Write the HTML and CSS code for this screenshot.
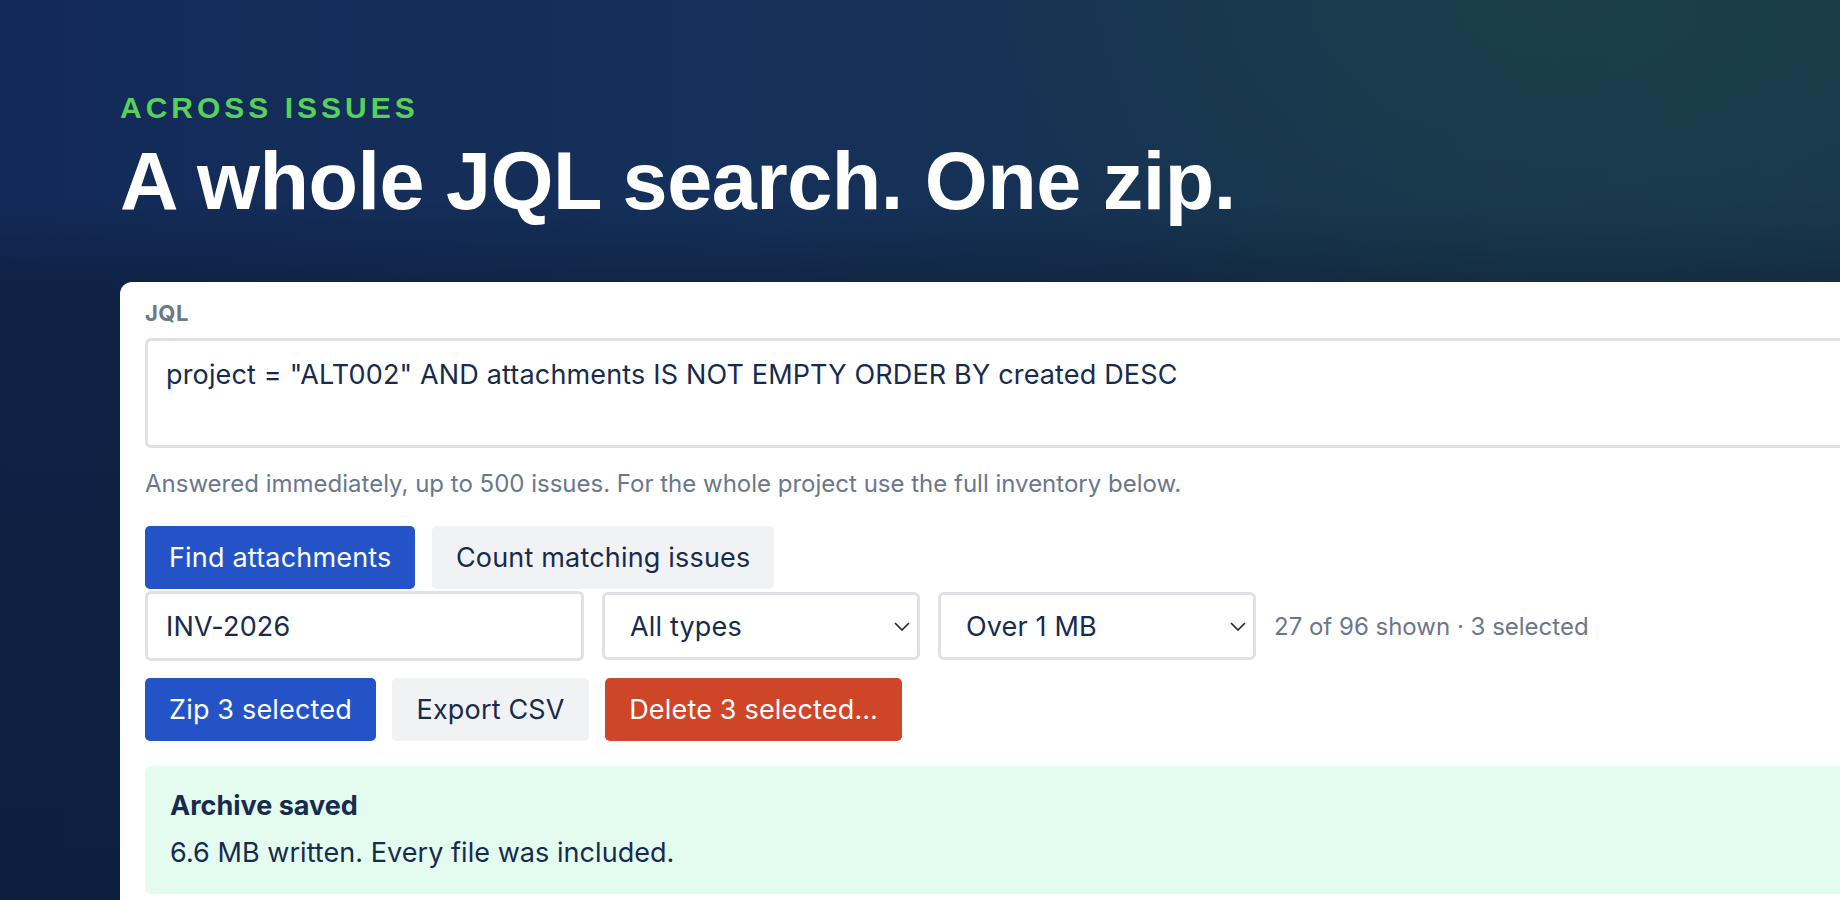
FILE: index.html
```html
<!DOCTYPE html>
<html lang="en">
<head>
<meta charset="utf-8">
<title>Across issues</title>
<link rel="stylesheet" href="styles.css">
</head>
<body>
<main class="page">
  <p class="eyebrow">ACROSS ISSUES</p>
  <h1 class="title">A whole JQL search. One zip.</h1>
  <section class="card">
    <label class="field-label" for="jql">JQL</label>
    <textarea id="jql" class="jql" spellcheck="false">project = "ALT002" AND attachments IS NOT EMPTY ORDER BY created DESC</textarea>
    <p class="hint">Answered immediately, up to 500 issues. For the whole project use the full inventory below.</p>
    <div class="actions actions-top">
      <button class="btn btn-primary" type="button">Find attachments</button>
      <button class="btn btn-secondary" type="button">Count matching issues</button>
    </div>
    <div class="filters">
      <input class="filter-input" type="text" value="INV-2026" spellcheck="false">
      <div class="select-wrap">
        <select class="select"><option>All types</option></select>
        <svg class="chev" viewBox="0 0 16 9" aria-hidden="true"><path d="M1 1 L8 8 L15 1"/></svg>
      </div>
      <div class="select-wrap">
        <select class="select"><option>Over 1 MB</option></select>
        <svg class="chev" viewBox="0 0 16 9" aria-hidden="true"><path d="M1 1 L8 8 L15 1"/></svg>
      </div>
      <span class="count">27 of 96 shown · 3 selected</span>
    </div>
    <div class="actions actions-bottom">
      <button class="btn btn-primary" type="button">Zip 3 selected</button>
      <button class="btn btn-secondary" type="button">Export CSV</button>
      <button class="btn btn-danger" type="button">Delete 3 selected…</button>
    </div>
    <div class="notice">
      <p class="notice-title">Archive saved</p>
      <p class="notice-body">6.6 MB written. Every file was included.</p>
    </div>
  </section>
</main>
</body>
</html>
```
FILE: styles.css
```css
* { box-sizing: border-box; }

html, body {
  margin: 0;
  height: 100%;
}

body {
  overflow: hidden;
  font-family: Inter, "Noto Sans", sans-serif;
  color: #172b4d;
  background:
    radial-gradient(ellipse 640px 360px at 1560px 0px, rgba(30, 70, 72, 0.6), rgba(30, 70, 72, 0) 100%),
    linear-gradient(to bottom, rgba(8, 18, 36, 0) 0px, rgba(8, 18, 36, 0) 200px, rgba(8, 18, 36, 0.35) 285px, rgba(8, 18, 36, 0.5) 900px),
    linear-gradient(90deg, #132a58 0%, #15305a 40%, #17344f 75%, #18374a 100%);
}

.page {
  padding: 90px 0 0 120px;
}

.eyebrow {
  margin: 0;
  font: 700 30px/36px "Liberation Sans", Arial, sans-serif;
  letter-spacing: 4px;
  color: #57d15b;
}

.title {
  margin: 11px 0 0;
  font: 700 81px/89px "Liberation Sans", Arial, sans-serif;
  letter-spacing: -0.5px;
  color: #ffffff;
}

.card {
  margin-top: 56px;
  width: 1760px;
  min-height: 700px;
  background: #ffffff;
  border-radius: 12px 12px 0 0;
  padding: 18px 25px;
}

.field-label {
  display: block;
  font-weight: 700;
  font-size: 22px;
  line-height: 26px;
  letter-spacing: 0.5px;
  color: #6b778c;
}

.jql {
  display: block;
  width: 100%;
  height: 110px;
  margin-top: 12px;
  border: 3px solid #dfe1e6;
  border-radius: 6px;
  padding: 18px;
  font-family: Inter, "Noto Sans", sans-serif;
  font-size: 27px;
  line-height: 1.21;
  letter-spacing: 0.16px;
  color: #172b4d;
  resize: none;
  outline: none;
  background: #fff;
}

.hint {
  margin: 18px 0 0;
  font-size: 24px;
  line-height: 36px;
  color: #6b778c;
}

.actions {
  display: flex;
  gap: 16.5px;
}

.actions-top { margin-top: 24px; }
.actions-bottom { margin-top: 16.5px; }

.btn {
  height: 63px;
  padding: 0 24px;
  border: 0;
  border-radius: 5px;
  font-family: Inter, "Noto Sans", sans-serif;
  font-size: 27px;
  font-weight: 400;
  line-height: 63px;
  letter-spacing: 0.18px;
  cursor: pointer;
}

.btn-primary { background: #2453c7; color: #ffffff; }
.btn-secondary { background: #f1f2f4; color: #172b4d; }
.btn-danger { background: #cf4527; color: #ffffff; }

.filters {
  display: flex;
  align-items: center;
  gap: 18px;
  margin-top: 2px;
}

.filter-input {
  width: 439px;
  height: 70px;
  border: 3px solid #dfe1e6;
  border-radius: 6px;
  padding: 0 18px;
  font-family: Inter, "Noto Sans", sans-serif;
  font-size: 27px;
  letter-spacing: 0.16px;
  color: #172b4d;
  outline: none;
}

.select-wrap {
  position: relative;
}

.select {
  appearance: none;
  -webkit-appearance: none;
  display: block;
  width: 318px;
  height: 68px;
  border: 3px solid #dfe1e6;
  border-radius: 6px;
  padding: 0 40px 0 25px;
  background: #ffffff;
  font-family: Inter, "Noto Sans", sans-serif;
  font-size: 27px;
  letter-spacing: 0.16px;
  color: #172b4d;
  outline: none;
}

.chev {
  position: absolute;
  right: 10px;
  top: 50%;
  width: 16px;
  height: 9px;
  margin-top: -4.5px;
  fill: none;
  stroke: #172b4d;
  stroke-width: 1.7;
  pointer-events: none;
}

.count {
  font-size: 24px;
  color: #6b778c;
}

.notice {
  margin-top: 25px;
  background: #e3fcef;
  border-radius: 6px;
  padding: 20px 25px;
}

.notice-title {
  margin: 0;
  font-weight: 700;
  font-size: 27px;
  line-height: 40.5px;
}

.notice-body {
  margin: 7px 0 0;
  font-size: 27px;
  line-height: 40.5px;
  letter-spacing: 0.05px;
}
```
